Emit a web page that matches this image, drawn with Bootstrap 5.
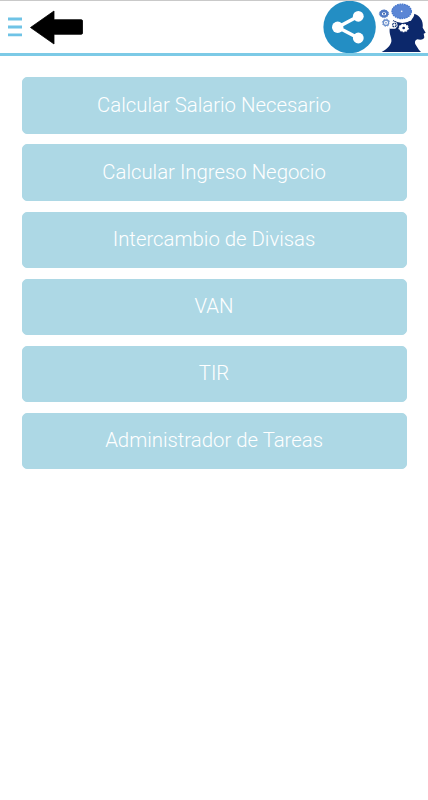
<!DOCTYPE html>
<html lang="es">
<head>
<meta charset="utf-8">
<meta name="viewport" content="width=device-width, initial-scale=1">
<title>Calculadora</title>
<link href="https://cdn.jsdelivr.net/npm/bootstrap@5.3.0/dist/css/bootstrap.min.css" rel="stylesheet">
<style>
body{font-family:Roboto,"Liberation Sans",sans-serif;background:#fff}
.topbar{height:56px;border-top:1px solid #c9c9c9;border-bottom:3px solid #7ccae6;padding:0 1px 0 8px}
.topbar svg{display:block}
.icon-btn{line-height:0;border-radius:0}
.arrow-btn{margin-left:8px}
.menu-list{padding:21.4px 21.5px 0 21.6px;gap:10.8px}
.btn-option{--bs-btn-color:#fff;--bs-btn-bg:#add8e5;--bs-btn-border-color:#add8e5;--bs-btn-hover-color:#fff;--bs-btn-hover-bg:#9accdc;--bs-btn-hover-border-color:#9accdc;height:56.3px;border-radius:5px;font-size:20.35px;font-weight:300;line-height:24px;padding:0 8px 1.4px}
</style>
</head>
<body>
<header class="topbar d-flex align-items-center justify-content-between">
  <div class="d-flex align-items-center">
    <button class="btn p-0 border-0 icon-btn" aria-label="Menú">
      <svg width="14" height="20" viewBox="0 0 14 20"><path d="M0 2h14M0 10h14M0 17.800h14" stroke="#6fc3e6" stroke-width="2.800"/></svg>
    </button>
    <button class="btn p-0 border-0 icon-btn arrow-btn" aria-label="Volver">
      <svg width="53" height="35" viewBox="0 0 53 35"><path d="M.5 17.500 24 1V9.700H51.200q1.300 0 1.300 1.300V23q0 1.300-1.300 1.300H24V34Z" fill="#000" stroke="#000" stroke-width=".8" stroke-linejoin="round"/></svg>
    </button>
  </div>
  <div class="d-flex align-items-center">
    <button class="btn p-0 border-0 icon-btn" aria-label="Compartir">
      <svg width="54" height="52" viewBox="0 0 54 52"><circle cx="26.600" cy="26" r="26.200" fill="#238ec4"/><path d="M35.300 15.300 14.700 26.200 35.300 37" fill="none" stroke="#fff" stroke-width="3.500"/><g fill="#fff"><circle cx="35.300" cy="15.300" r="5.400"/><circle cx="14.700" cy="26.200" r="5.700"/><circle cx="35.300" cy="37" r="5.400"/></g></svg>
    </button>
    <svg width="50" height="50" viewBox="6 6 150 150" role="img" aria-label="Logo">
      <path d="M20 156C34 148 46 138 49 125C51 114 42 104 44 87C45 75 49 66 56 60L108 62 117 41C134 45 146 62 143 83L152 98 146 101 148 112C147 119 137 121 127 118C119 121 118 129 123 136L132 150 138 156Z" fill="#0c286b"/>
      <ellipse cx="82" cy="40" rx="36" ry="29" fill="#fff"/>
      <ellipse cx="80" cy="34" rx="29" ry="21.500" fill="#5b86d5"/>
      <ellipse cx="80" cy="34" rx="29" ry="21.500" fill="none" stroke="#4777cc" stroke-width="4" stroke-dasharray="5 2"/>
      <circle cx="80" cy="34" r="2.500" fill="#fff"/>
      <ellipse cx="27" cy="41" rx="10" ry="8" fill="none" stroke="#5079c4" stroke-width="7"/>
      <ellipse cx="27" cy="41" rx="14" ry="11" fill="none" stroke="#5079c4" stroke-width="3" stroke-dasharray="4 3"/>
      <circle cx="27" cy="41" r="3" fill="#355da9"/>
      <circle cx="33" cy="68" r="8" fill="none" stroke="#6d91cd" stroke-width="4"/>
      <circle cx="33" cy="68" r="11" fill="none" stroke="#6d91cd" stroke-width="3" stroke-dasharray="4 4.600"/>
      <circle cx="33" cy="68" r="2.500" fill="#7898cd"/>
      <path d="M43 66 54 63 66 68 68 78 61 86 44 86Z" fill="#fff"/>
      <circle cx="58" cy="75" r="5.500" fill="none" stroke="#193975" stroke-width="3.500" stroke-dasharray="6 2"/>
      <ellipse cx="86" cy="84" rx="14" ry="11" fill="#fff"/>
      <ellipse cx="86" cy="84" rx="14" ry="11" fill="none" stroke="#fff" stroke-width="3.500" stroke-dasharray="5 3.500"/>
      <circle cx="86" cy="84" r="4" fill="#0c286b"/>
    </svg>
  </div>
</header>
<main class="menu-list d-grid">
  <button class="btn btn-option">Calcular Salario Necesario</button>
  <button class="btn btn-option">Calcular Ingreso Negocio</button>
  <button class="btn btn-option">Intercambio de Divisas</button>
  <button class="btn btn-option">VAN</button>
  <button class="btn btn-option">TIR</button>
  <button class="btn btn-option">Administrador de Tareas</button>
</main>
<script src="https://cdn.jsdelivr.net/npm/bootstrap@5.3.0/dist/js/bootstrap.bundle.min.js"></script>
</body>
</html>
